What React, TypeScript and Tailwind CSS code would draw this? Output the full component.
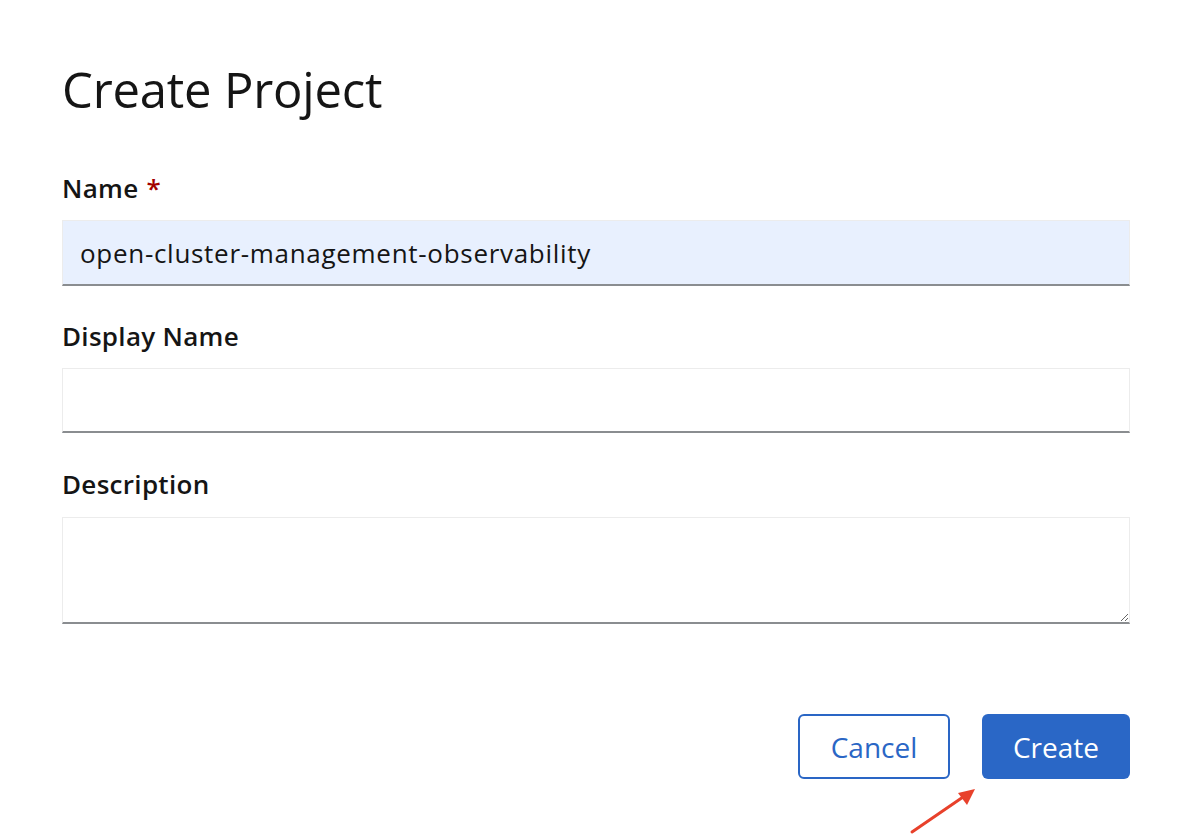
import React from "react";

const font = { fontFamily: '"Open Sans", "Liberation Sans", sans-serif' };

function Label({ children, required }: { children: React.ReactNode; required?: boolean }) {
  return (
    <label className="block text-[26px] leading-[30px] font-semibold text-[#151515] tracking-[0.3px]">
      {children}
      {required && <span className="ml-[8px] text-[#a30000]">*</span>}
    </label>
  );
}

export default function App() {
  return (
    <div className="relative w-[1188px] h-[840px] bg-white overflow-hidden" style={font}>
      <div className="ml-[62px] w-[1068px] pt-[61px] flex flex-col">
        <h1 className="text-[49px] leading-[56px] font-medium text-[#151515] tracking-[-0.2px]">Create Project</h1>

        {/* Name */}
        <div className="mt-[56px]">
          <Label required>Name</Label>
        </div>
        <input
          readOnly
          value="open-cluster-management-observability"
          className="mt-[17px] h-[66px] w-full px-[17px] bg-[#e8f0fe] border border-[#ececec] border-b-2 border-b-[#8a8d90] text-[26px] tracking-[0.7px] text-[#151515] outline-none"
        />

        {/* Display Name */}
        <div className="mt-[35px]">
          <Label>Display Name</Label>
        </div>
        <input
          readOnly
          value=""
          className="mt-[17px] h-[65px] w-full px-[17px] bg-white border border-[#ececec] border-b-2 border-b-[#8a8d90] text-[26px] outline-none"
        />

        {/* Description */}
        <div className="mt-[36px]">
          <Label>Description</Label>
        </div>
        <textarea
          readOnly
          className="mt-[18px] h-[107px] w-full px-[17px] py-[10px] bg-white border border-[#ececec] border-b-2 border-b-[#8a8d90] text-[26px] outline-none resize-y"
        />

        <div className="mt-[90px] flex justify-end gap-[32px]">
          <button className="w-[152px] h-[65px] rounded-[6px] border-2 border-[#2a66c5] bg-white text-[#2a66c5] text-[28px]">
            Cancel
          </button>
          <button className="w-[148px] h-[65px] rounded-[6px] bg-[#2a67c6] text-white text-[28px]">
            Create
          </button>
        </div>
      </div>

      {/* annotation arrow */}
      <svg className="absolute left-[900px] top-[780px]" width="90" height="60" viewBox="0 0 90 60">
        <line x1="12" y1="52" x2="66" y2="15" stroke="#e8412b" strokeWidth="3" strokeLinecap="round" />
        <polygon points="75,9 58,13 67,25" fill="#e8412b" />
      </svg>
    </div>
  );
}
